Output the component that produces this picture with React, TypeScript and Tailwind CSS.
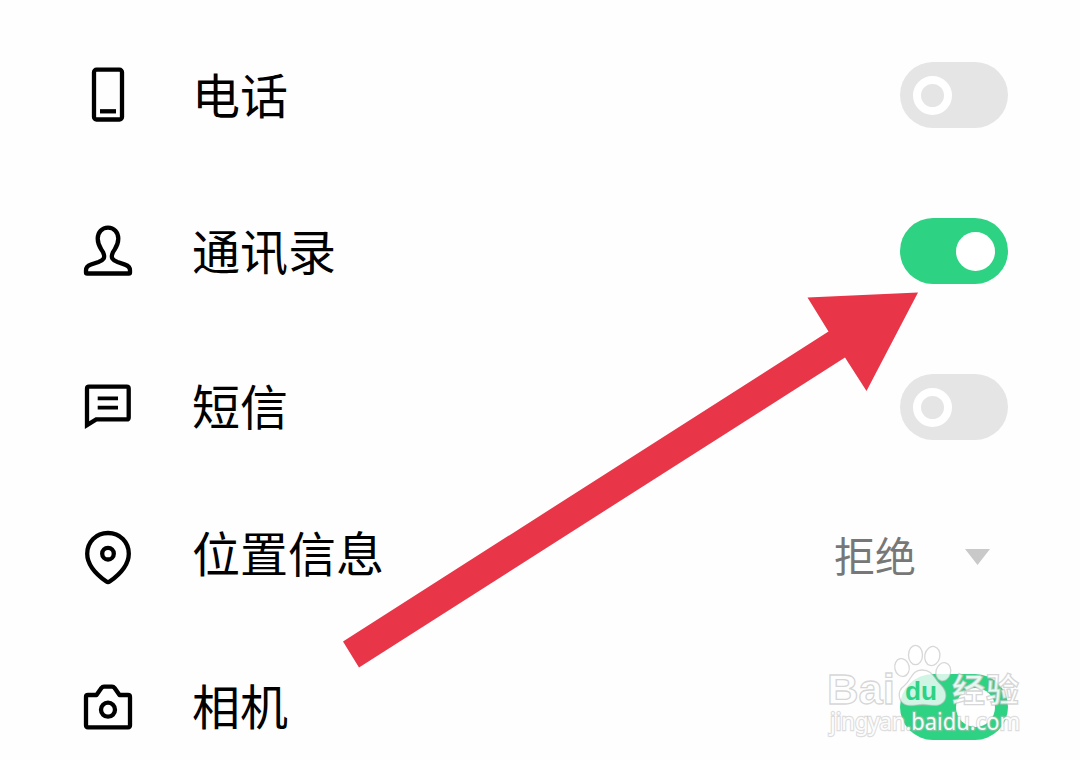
import React, { useState } from 'react';

const PhoneIcon = () => (
  <>
    <rect x="16" y="4.7" width="28" height="49.8" rx="2.5" />
    <path d="M22 46.3h16" />
  </>
);

const ContactIcon = () => (
  <path d="M30 6.6C24 6.6 19.7 11.2 19.7 17.6C19.7 24.8 23 27.4 25.2 31.6C27.6 37 25.4 39 20.5 40.9L13 43.6C9.6 44.8 8 46.6 8 49.4V51.4Q8 52.5 9.2 52.5H50.8Q52 52.5 52 51.4V49.4C52 46.6 50.4 44.8 47 43.6L39.5 40.9C34.6 39 32.4 37 34.8 31.6C37 27.4 40.3 24.8 40.3 17.6C40.3 11.2 36 6.6 30 6.6Z" />
);

const MessageIcon = () => (
  <>
    <path d="M9 48.1V11.7Q9 9.7 11 9.7H48.7Q50.7 9.7 50.7 11.7V40.4Q50.7 42.4 48.7 42.4H18.2L9 48.1Z" strokeLinejoin="miter" />
    <path d="M19.7 21.3H40M19.7 30.6H40" strokeWidth="3.8" />
  </>
);

const LocationIcon = () => (
  <>
    <path d="M30 6C18 6 9.2 15 9.2 26.7C9.2 37.5 17 46.5 28.4 54.6Q30 55.7 31.6 54.6C43 46.5 50.8 37.5 50.8 26.7C50.8 15 42 6 30 6Z" />
    <circle cx="30" cy="26.7" r="5.8" />
  </>
);

const CameraIcon = () => (
  <>
    <path d="M10 18H18.5L23.4 11Q24.4 9.7 26 9.7H34Q35.6 9.7 36.6 11L41.5 18H50Q52 18 52 20V48.3Q52 50.3 50 50.3H10Q8 50.3 8 48.3V20Q8 18 10 18Z" />
    <circle cx="30" cy="32.7" r="7" />
  </>
);

interface Permission {
  id: string;
  label: string;
  icon: React.ReactNode;
  height: string;
  nudge: string;
  value?: string;
}

const PERMISSIONS: Permission[] = [
  { id: 'phone', label: '电话', icon: <PhoneIcon />, height: 'h-[156px]', nudge: 'pt-1.5' },
  { id: 'contacts', label: '通讯录', icon: <ContactIcon />, height: 'h-[156px]', nudge: 'pt-1.5' },
  { id: 'sms', label: '短信', icon: <MessageIcon />, height: 'h-[156px]', nudge: 'pt-1' },
  { id: 'location', label: '位置信息', icon: <LocationIcon />, height: 'h-36', nudge: 'pb-0.5', value: '拒绝' },
  { id: 'camera', label: '相机', icon: <CameraIcon />, height: 'h-[156px]', nudge: 'pt-1' },
];

const Toggle: React.FC<{ on: boolean; label: string; onClick: () => void }> = ({ on, label, onClick }) => (
  <button
    role="switch"
    aria-checked={on}
    aria-label={label}
    onClick={onClick}
    className={`flex h-[66px] w-[108px] items-center rounded-full px-[13px] ${on ? 'justify-end bg-[#2dd283]' : 'justify-start bg-[#e5e5e5]'}`}
  >
    <span className={`size-[39px] rounded-full ${on ? 'bg-white' : 'border-8 border-white'}`} />
  </button>
);

const Watermark = () => (
  <svg
    className="pointer-events-none absolute left-[810px] top-[640px]"
    width="230"
    height="120"
    viewBox="810 640 230 120"
    fill="#fff"
    fillOpacity="0.78"
    stroke="#bcbcbc"
    strokeOpacity="0.6"
    strokeWidth="1.3"
  >
    {/* Paw */}
    <ellipse cx="902" cy="667.5" rx="7.2" ry="9" transform="rotate(-12 902 667.5)" />
    <ellipse cx="915.5" cy="655" rx="7" ry="9.7" />
    <ellipse cx="932.3" cy="656" rx="7.5" ry="9.7" transform="rotate(12 932.3 656)" />
    <ellipse cx="943.3" cy="671.8" rx="7.3" ry="9.2" transform="rotate(15 943.3 671.8)" />
    <path d="M922 670C911 670 912 680 904 686C897 691 898 701 905 704.5C911 707 916 704.5 923 704.5C930 704.5 936 707 941 704C948 700 947 691 941 685C934 679 933 670 922 670Z" />
    <g className="font-['Liberation_Sans',sans-serif] font-bold">
      <text x="827" y="703.5" fontSize="43" textLength="68" lengthAdjust="spacingAndGlyphs">Bai</text>
      <text x="905" y="700" fontSize="26" textLength="32" lengthAdjust="spacingAndGlyphs" fill="#2dd283" fillOpacity="1" stroke="none">du</text>
    </g>
    <text x="952" y="701.5" fontSize="33" textLength="67" fillOpacity="0.9" className="font-['Noto_Sans_CJK_SC',sans-serif] font-bold">经验</text>
    <text x="830" y="730" fontSize="23" textLength="190" lengthAdjust="spacingAndGlyphs" paintOrder="stroke" strokeWidth="2.4" strokeOpacity="0.5" fillOpacity="0.95" className="font-['Noto_Sans',sans-serif]">jingyan.baidu.com</text>
  </svg>
);

export default function App() {
  const [enabled, setEnabled] = useState<Record<string, boolean>>({ contacts: true, camera: true });

  const toggle = (id: string) => setEnabled({ ...enabled, [id]: !enabled[id] });

  return (
    <main className="relative h-[760px] w-[1080px] overflow-hidden bg-[#fefefe] pt-[17px] font-['Liberation_Sans','Noto_Sans_CJK_SC',sans-serif]">
      {PERMISSIONS.map((item) => (
        <div key={item.id} className={`flex items-center pl-[78px] pr-[72px] ${item.height}`}>
          <svg width="60" height="60" viewBox="0 0 60 60" fill="none" stroke="#000" strokeWidth="4.3" strokeLinejoin="round" className="shrink-0">
            {item.icon}
          </svg>
          <span className={`ml-[54px] flex-1 text-[48px] leading-none text-black ${item.nudge}`}>{item.label}</span>
          {item.value ? (
            <button className="mr-[18px] flex items-center gap-[49px] text-[41px] leading-none text-[#777777]">
              <span className="pt-[3px]">{item.value}</span>
              <svg width="25" height="16" viewBox="0 0 25 16" fill="#c9c9c9">
                <path d="M0 0H25L12.5 16Z" />
              </svg>
            </button>
          ) : (
            <Toggle on={!!enabled[item.id]} label={item.label} onClick={() => toggle(item.id)} />
          )}
        </div>
      ))}

      {/* Pointer to the contacts switch */}
      <svg className="pointer-events-none absolute left-0 top-0" width="1080" height="760" viewBox="0 0 1080 760">
        <path d="M918 292.5L866.5 391L845 357.5L359 667.5L343 641.5L828.5 331.5L807.5 297.5Z" fill="#e93548" />
      </svg>
      <Watermark />
    </main>
  );
}
